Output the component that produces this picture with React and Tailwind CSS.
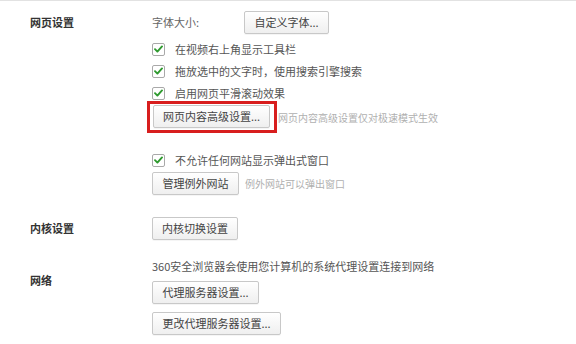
import React from "react";

const font = { fontFamily: '"Noto Sans CJK SC", "Noto Sans", sans-serif' };

function Btn({ w, children }) {
  return (
    <button
      className={`${w} h-[23px] shrink-0 flex items-center justify-center border border-[#c8c8c8] rounded-[2px] bg-gradient-to-b from-white to-[#efefef] text-[11px] text-[#444] leading-none shadow-[0_1px_0_rgba(0,0,0,0.04)]`}
    >
      {children}
    </button>
  );
}

function Check({ children }) {
  return (
    <div className="h-[22px] flex items-center gap-[10px]">
      <span className="w-[13px] h-[13px] border border-[#a9a9a9] rounded-[2px] bg-white flex items-center justify-center">
        <svg width="9" height="8" viewBox="0 0 9 8">
          <path d="M1 4.2 L3.4 6.6 L8 1.4" fill="none" stroke="#2f9a2f" strokeWidth="1.9" strokeLinecap="round" strokeLinejoin="round" />
        </svg>
      </span>
      <span className="text-[11px] text-[#555]">{children}</span>
    </div>
  );
}

export default function App() {
  return (
    <div className="w-[576px] h-[344px] bg-white border-t border-[#e2e2e2] overflow-hidden" style={font}>
      <div className="pt-[10px]">
        {/* 网页设置 */}
        <div className="flex">
          <div className="w-[152px] pl-[30px] h-[23px] flex items-center text-[11px] font-bold text-[#333]">
            网页设置
          </div>
          <div className="flex flex-col">
            <div className="flex items-center gap-[45px] h-[23px]">
              <span className="text-[11px] text-[#666]">字体大小:</span>
              <Btn w="w-[85px]">自定义字体...</Btn>
            </div>
            <div className="mt-[4px]">
              <Check>在视频右上角显示工具栏</Check>
              <Check>拖放选中的文字时，使用搜索引擎搜索</Check>
              <Check>启用网页平滑滚动效果</Check>
            </div>
            <div className="flex items-center -mt-[3px]">
              <div className="flex -ml-[5px] border-[3px] border-[#d81e1e] pl-[3px] pr-[4px] pt-[1px] pb-[2px]">
                <Btn w="w-[117px]">网页内容高级设置...</Btn>
              </div>
              <span className="ml-[1px] text-[10px] text-[#b0b0b0]">网页内容高级设置仅对极速模式生效</span>
            </div>
            <div className="mt-[16px]">
              <Check>不允许任何网站显示弹出式窗口</Check>
            </div>
            <div className="flex items-center gap-[6px] mt-[1px]">
              <Btn w="w-[87px]">管理例外网站</Btn>
              <span className="text-[10px] text-[#b0b0b0]">例外网站可以弹出窗口</span>
            </div>
          </div>
        </div>

        {/* 内核设置 */}
        <div className="flex mt-[22px]">
          <div className="w-[152px] pl-[30px] h-[23px] flex items-center text-[11px] font-bold text-[#333]">
            内核设置
          </div>
          <Btn w="w-[86px]">内核切换设置</Btn>
        </div>

        {/* 网络 */}
        <div className="flex mt-[16px]">
          <div className="w-[152px] pl-[30px]">
            <div className="mt-[14px] h-[20px] flex items-center text-[11px] font-bold text-[#333]">网络</div>
          </div>
          <div className="flex flex-col">
            <div className="h-[20px] flex items-center text-[11px] text-[#555]">
              360安全浏览器会使用您计算机的系统代理设置连接到网络
            </div>
            <div className="flex mt-[5px]">
              <Btn w="w-[107px]">代理服务器设置...</Btn>
            </div>
            <div className="flex mt-[8px]">
              <Btn w="w-[129px]">更改代理服务器设置...</Btn>
            </div>
          </div>
        </div>
      </div>
    </div>
  );
}
